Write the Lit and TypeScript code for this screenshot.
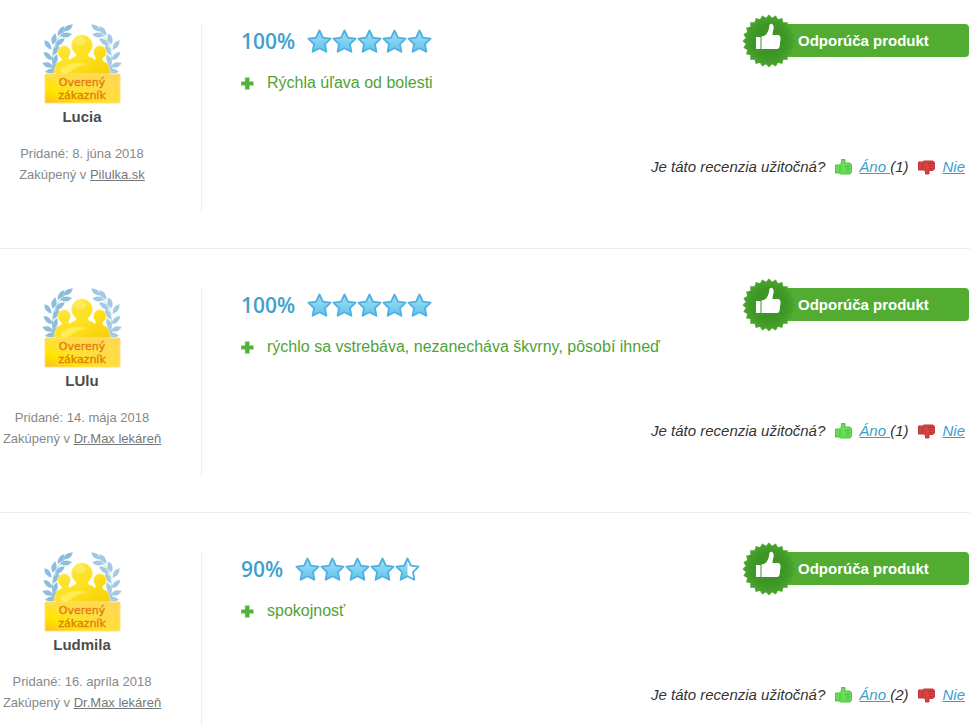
import { LitElement, html, css, svg } from "lit";
import { customElement, property } from "lit/decorators.js";

interface Review {
  name: string;
  date: string;
  shop: string;
  score: number;
  pro: string;
  yes: number;
}

const REVIEWS: Review[] = [
  { name: "Lucia", date: "8. júna 2018", shop: "Pilulka.sk", score: 100, pro: "Rýchla úľava od bolesti", yes: 1 },
  { name: "LUlu", date: "14. mája 2018", shop: "Dr.Max lekáreň", score: 100, pro: "rýchlo sa vstrebáva, nezanecháva škvrny, pôsobí ihneď", yes: 1 },
  { name: "Ludmila", date: "16. apríla 2018", shop: "Dr.Max lekáreň", score: 90, pro: "spokojnosť", yes: 2 },
];

// Leaves of one laurel branch: x, y, rotation in degrees.
const LEAVES = [
  [26, 4, -35], [19, 7, -55], [24, 11, -8], [12, 15, -78], [18, 18, -38],
  [6, 21, 55], [14, 26, -65], [6, 32, 42], [13, 36, -70], [6, 41, 20], [13, 43, -50], [9, 47, -8],
];

const laurel = () => svg`
  <path d="M22 8 Q6 22 12 46" fill="none" stroke="#a9cfe4"></path>
  ${LEAVES.map(([x, y, r]) => svg`<path d="M-6 0 Q0 -5 6 0 Q0 5 -6 0 Z" transform="translate(${x} ${y}) rotate(${r})"></path>`)}`;

// Scalloped rim of the recommendation seal.
const sealPoints = Array.from({ length: 48 }, (_, i) => {
  const a = (i * Math.PI) / 24;
  const r = i % 2 ? 23.5 : 26.5;
  return `${(27 + r * Math.cos(a)).toFixed(2)},${(27 + r * Math.sin(a)).toFixed(2)}`;
}).join(" ");

const STAR = "M12.5 1.5 L15.9 8.6 L23.6 9.6 L18 15.1 L19.4 22.8 L12.5 19.2 L5.6 22.8 L7 15.1 L1.4 9.6 L9.1 8.6 Z";

@customElement("verified-badge")
export class VerifiedBadge extends LitElement {
  static styles = css`
    :host { display: block; }
    svg { display: block; }
    .leaves { fill: #8cbedb; }
    .right { opacity: 0.8; }
    .people { fill: url(#body); stroke: #fff3a0; stroke-width: 0.6; }
    .label { font: 11px "DejaVu Sans", sans-serif; fill: #e07a10; stroke: #e07a10; stroke-width: 0.3; text-anchor: middle; }
  `;
  render() {
    return html`<svg width="80" height="80" viewBox="0 0 80 80" role="img" aria-label="Overený zákazník">
      <defs>
        <linearGradient id="body" x1="0" y1="0" x2="1" y2="1">
          <stop offset="0" stop-color="#ffe84a"></stop><stop offset=".55" stop-color="#fde01c"></stop><stop offset="1" stop-color="#f8cc08"></stop>
        </linearGradient>
        <linearGradient id="plinth" x1="0" y1="1" x2="1" y2="0">
          <stop offset="0" stop-color="#fdbd1c"></stop><stop offset=".25" stop-color="#ffe600"></stop>
          <stop offset=".5" stop-color="#ffdf3c"></stop><stop offset="1" stop-color="#ffd65a"></stop>
        </linearGradient>
      </defs>
      <g class="leaves">${laurel()}</g>
      <g class="leaves right" transform="translate(80 0) scale(-1 1)">${laurel()}</g>
      <g class="people">
        <path d="M12 52 V47 Q13 39 20 36 L19 34 A6.500 6.500 0 1 1 26.500 33 L27 36 Q31 33 34 32 L34 30 A10.500 10.500 0 1 1 46 30 L46 32 Q50 33 53 36 L53.500 33 A6.500 6.500 0 1 1 61 34 L60 36 Q67 39 68 47 V52 Z"></path>
      </g>
      <ellipse cx="38" cy="17" rx="6" ry="4" fill="#fff27a" opacity=".6"></ellipse>
      <path d="M17 47 Q27 36 46 40 Q32 43 24 51 Z" fill="#fff06a" opacity=".7"></path>
      <rect x="3" y="50" width="75" height="29" rx="1" fill="url(#plinth)" stroke="#ffdd86"></rect>
      <text class="label" x="40" y="62">Overený</text>
      <text class="label" x="40" y="75">zákazník</text>
    </svg>`;
  }
}

@customElement("star-rating")
export class StarRating extends LitElement {
  @property({ type: Number }) score = 100;
  static styles = css`
    :host { display: flex; }
    svg { display: block; }
    .rim { fill: none; stroke: #4db0e0; stroke-width: 1.8; stroke-linejoin: round; }
  `;
  render() {
    const value = this.score / 20;
    return [0, 1, 2, 3, 4].map((i) => {
      const fill = Math.max(0, Math.min(1, value - i));
      return html`<svg width="25" height="25" viewBox="0 0 25 25" aria-hidden="true">
        <defs>
          <linearGradient id="blue" x1="0" y1="0" x2="0" y2="1">
            <stop offset="0" stop-color="#a4e0f7"></stop><stop offset="1" stop-color="#5cc4ee"></stop>
          </linearGradient>
          <clipPath id="part-${i}"><rect width=${25 * fill} height="25"></rect></clipPath>
        </defs>
        <path d=${STAR} fill="#fff"></path>
        <path d=${STAR} fill="url(#blue)" clip-path="url(#part-${i})"></path>
        <path class="rim" d=${STAR}></path>
      </svg>`;
    });
  }
}

@customElement("review-item")
export class ReviewItem extends LitElement {
  @property({ attribute: false }) review!: Review;
  static styles = css`
    :host { display: block; }
    .review { display: flex; min-height: 188px; }
    .author { box-sizing: border-box; flex: 0 0 202px; padding-right: 37px; border-right: 1px solid #eee; text-align: center; }
    .author verified-badge { display: flex; justify-content: center; }
    .name { margin: 0; font-size: 15px; line-height: 26px; font-weight: 700; color: #4d4d4d; }
    .meta { margin: 13px 0 0; font-size: 13px; line-height: 21px; color: #888; white-space: nowrap; }
    .meta a { color: #777; }
    .body { flex: 1; display: flex; flex-direction: column; padding-left: 39px; }
    .top { display: flex; justify-content: space-between; align-items: flex-start; }
    .score { display: flex; align-items: center; gap: 12px; font: 600 21px/34px "Open Sans", sans-serif; color: #409fcb; }
    .pros { list-style: none; margin: 15px 0 0; padding: 0; font-size: 16px; line-height: 20px; color: #50a336; }
    .pros li { display: flex; align-items: center; gap: 13px; }
    .recommend { display: flex; align-items: center; flex: 0 0 227px; height: 33px; margin-right: 1px; color: #fff; font-size: 15px; font-weight: 700; }
    .seal { flex: none; position: relative; z-index: 1; }
    .ribbon { flex: 1; margin-left: -14px; padding-left: 16px; border-radius: 0 4px 4px 0; background: #52ac32; line-height: 33px; }
    .useful { display: flex; align-items: center; justify-content: flex-end; margin: auto 5px 35px 0; font-size: 15px; line-height: 20px; font-style: italic; color: #333; }
    .useful a { color: #3a9fcd; white-space: pre; }
    .thumb { margin: 0 7px 0 10px; }
  `;
  render() {
    const r = this.review;
    return html`<article class="review">
      <div class="author">
        <verified-badge></verified-badge>
        <h3 class="name">${r.name}</h3>
        <p class="meta">Pridané: ${r.date}<br />Zakúpený v <a href="#">${r.shop}</a></p>
      </div>
      <div class="body">
        <div class="top">
          <div>
            <div class="score"><span>${r.score}%</span><star-rating .score=${r.score}></star-rating></div>
            <ul class="pros"><li>
              <svg width="13" height="13" viewBox="0 0 13 13" aria-hidden="true">
                <path d="M4 .500 h4.500 v4 h4 v4 h-4 v4 h-4.500 v-4 h-4 v-4 h4 Z" fill="#55b135" stroke="#b5deaa" stroke-width=".6"></path>
              </svg><span>${r.pro}</span>
            </li></ul>
          </div>
          <div class="recommend">
            <svg class="seal" width="54" height="54" viewBox="0 0 54 54" aria-hidden="true">
              <defs><radialGradient id="seal">
                <stop offset="0" stop-color="#3b9223"></stop><stop offset=".6" stop-color="#3d9625"></stop><stop offset="1" stop-color="#4ba72f"></stop>
              </radialGradient></defs>
              <polygon points=${sealPoints} fill="url(#seal)"></polygon>
              <path d="M14 23 h4.500 v12 h-4.500 Z" fill="#fff"></path>
              <path d="M19.500 22.500 L23 21.500 Q27 18 27.500 11 Q28 9.500 29.500 9.800 Q33 11 31 17 L30.500 21 H36.500 Q39 21.500 38.500 25 L37.500 33 Q37 35 35 35 H19.500 Z" fill="#fff"></path>
            </svg>
            <span class="ribbon">Odporúča produkt</span>
          </div>
        </div>
        <div class="useful">
          <span>Je táto recenzia užitočná?</span>
          <svg class="thumb" width="17" height="16" viewBox="0 0 17 16" aria-hidden="true">
            <path d="M.500 6 H4.500 L6.500 4 V.500 H10 V4 H15 L16.500 5.500 V13.500 L15 15 H5.500 L4.500 14 H.500 Z" fill="#66dc57" stroke="#4cc542"></path>
            <path d="M5 7 V13 M10 7.500 H15 M11 10 H15 M11 12.500 H14" stroke="#48bd3f" fill="none"></path>
          </svg>
          <a href="#">Áno </a><span>(${r.yes})</span>
          <svg class="thumb" width="17" height="16" viewBox="0 0 17 16" aria-hidden="true">
            <path d="M.500 3 H4.500 L5.500 2 H15 L16.500 3.500 V10 L15 11.500 H11 V15 H7.500 V12.500 L5.500 11 H.500 Z" fill="#d04444" stroke="#bd3434"></path>
            <path d="M5 4 V10 M10 4.500 H15 M11 7 H15 M11 9.500 H14" stroke="#b33030" fill="none"></path>
          </svg>
          <a href="#">Nie</a>
        </div>
      </div>
    </article>`;
  }
}

@customElement("app-root")
export class AppRoot extends LitElement {
  static styles = css`
    :host { display: block; height: 100vh; overflow: hidden; background: #fff; font-family: "Liberation Sans", Arial, sans-serif; }
    .list { margin-right: 10px; }
    .row { display: block; padding: 39px 0 36px; border-bottom: 1px solid #eee; }
    .row:first-child { padding-top: 24px; }
  `;
  render() {
    return html`<main class="list">
      ${REVIEWS.map((r) => html`<review-item class="row" .review=${r}></review-item>`)}
    </main>`;
  }
}
